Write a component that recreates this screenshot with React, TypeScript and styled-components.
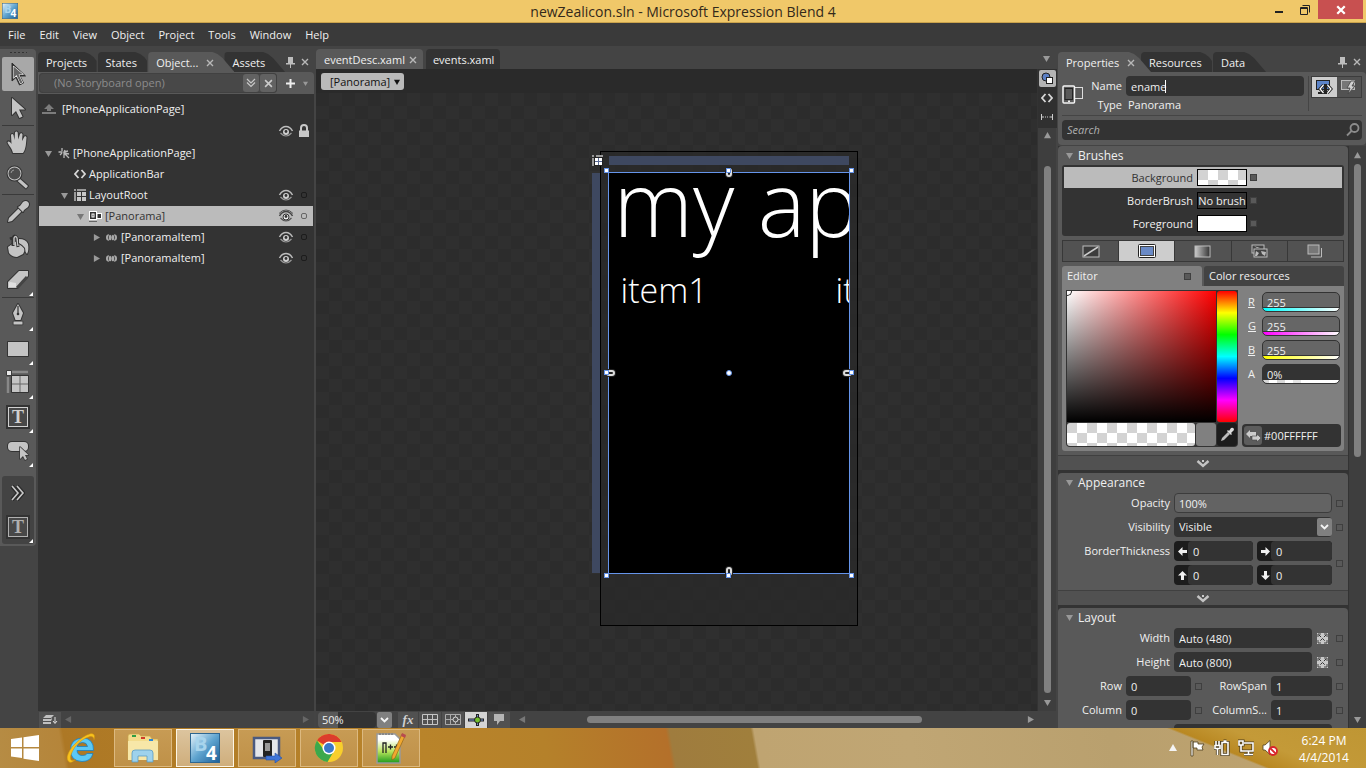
import React from "react";
import styled, { createGlobalStyle, css } from "styled-components";

const c = {
  text: "#f0f0f0",
  dim: "#8c8c8c",
  panel: "#595959",
  frame: "#444444",
  well: "#333333",
  light: "#bbbbbb",
  glyph: "#c4c4c4",
};

const Global = createGlobalStyle`
  *, *::before, *::after { box-sizing: border-box; }
  html, body, #root { height: 100%; }
  body { margin: 0; overflow: hidden; background: ${c.frame}; }
  body, button, input, select { font-family: "Open Sans", "Noto Sans", sans-serif; font-size: 11px; line-height: 16px; color: ${c.text}; }
  button { padding: 0; border: 0; background: none; cursor: default; }
  input, select { padding: 0; border: 0; outline: 0; min-width: 0; }
  ul { list-style: none; margin: 0; padding: 0; }
  h2 { margin: 0; }
  svg { display: block; flex: none; }
`;

/* ---------- window frame ---------- */

const Shell = styled.div`
  display: flex;
  flex-direction: column;
  height: 100vh;
`;

const TitleBar = styled.header`
  display: grid;
  grid-template-columns: 120px 1fr 120px;
  flex: none;
  height: 23px;
  background: #f0c869;
  border-bottom: 1px solid #c9a24c;
`;

const AppBadge = styled.span`
  padding: 3px 0 0 2px;
`;

const Title = styled.h1`
  margin: 0;
  text-align: center;
  font-size: 14px;
  line-height: 24px;
  font-weight: 400;
  color: #33291a;
`;

const WindowButtons = styled.div`
  display: flex;
  justify-content: flex-end;
  padding-right: 3px;
`;

const WindowButton = styled.button<{ $close?: boolean }>`
  display: flex;
  align-items: center;
  justify-content: center;
  width: ${(p) => (p.$close ? 45 : 26)}px;
  height: 19px;
  background: ${(p) => (p.$close ? "#c85050" : "transparent")};
`;

const MenuBar = styled.nav`
  display: flex;
  align-items: center;
  gap: 14px;
  flex: none;
  height: 23px;
  padding-left: 8px;
  background: #3a3a3a;
`;

const MenuItem = styled.button``;

const Workspace = styled.main`
  display: grid;
  grid-template-columns: 38px 276px minmax(0, 1fr) 308px;
  flex: 1;
  min-height: 0;
  background: ${c.frame};
`;

/* ---------- tool strip ---------- */

const ToolStrip = styled.aside`
  display: flex;
  flex-direction: column;
  align-self: start;
  width: 36px;
  margin-top: 3px;
  padding: 0 2px 2px;
  border-radius: 0 4px 4px 0;
  background: ${c.panel};
`;

const Grip = styled.div`
  height: 8px;
  margin: 0 7px;
  background: radial-gradient(circle, #333 1px, transparent 1px) 0 0 / 4px 7px repeat-x;
`;

const ToolButton = styled.button<{ $on?: boolean; $more?: boolean }>`
  position: relative;
  display: flex;
  align-items: center;
  justify-content: center;
  height: 34px;
  border-radius: 2px;
  ${(p) => p.$on && css`background: #a8a8a8;`}
  ${(p) =>
    p.$more &&
    css`
      &::after {
        content: "";
        position: absolute;
        right: 1px;
        bottom: 1px;
        border: 2px solid #fff;
        border-left-color: transparent;
        border-top-color: transparent;
      }
    `}
`;

const ToolRule = styled.div`
  height: 1px;
  background: #3a3a3a;
`;

const ToolWell = styled.div`
  display: flex;
  flex-direction: column;
  margin-top: 8px;
  border-radius: 3px;
  background: #434343;
`;

/* ---------- docked panel tabs ---------- */

const TabRow = styled.div`
  display: flex;
  align-items: stretch;
  flex: none;
  height: 26px;
  padding-top: 6px;
`;

const PanelTab = styled.button<{ $on?: boolean; $slant?: boolean; $w: number }>`
  display: flex;
  align-items: center;
  gap: 8px;
  width: ${(p) => p.$w}px;
  margin-right: ${(p) => (p.$on ? -10 : 1)}px;
  z-index: ${(p) => (p.$on ? 1 : 0)};
  padding: 1px 0 0 8px;
  white-space: nowrap;
  border-top-left-radius: 4px;
  background: ${(p) => (p.$on ? c.panel : c.well)};
  clip-path: ${(p) =>
    p.$on || p.$slant
      ? "polygon(0 0, calc(100% - 22px) 0, calc(100% - 17px) 2px, calc(100% - 12px) 6px, 100% 100%, 0 100%)"
      : "polygon(0 0, calc(100% - 12px) 0, calc(100% - 7px) 2px, calc(100% - 3px) 5px, 100% 9px, 100% 100%, 0 100%)"};
`;

const DockButtons = styled.div`
  display: flex;
  align-items: center;
  gap: 6px;
  margin-left: auto;
  padding-right: 5px;
`;

/* ---------- objects and timeline ---------- */

const ObjectsPanel = styled.section`
  display: flex;
  flex-direction: column;
  min-height: 0;
`;

const StoryBar = styled.div`
  display: flex;
  align-items: center;
  flex: none;
  height: 22px;
  padding: 1px;
  background: ${c.panel};
  border-radius: 0 4px 0 0;
`;

const StoryField = styled.div`
  display: flex;
  align-items: center;
  gap: 1px;
  width: 238px;
  height: 20px;
  padding: 0 1px 0 15px;
  border-radius: 4px;
  background: #484848;
  box-shadow: inset 0 0 0 1px #414141;
  input {
    flex: 1;
    background: none;
    color: ${c.dim};
  }
`;

const SmallKey = styled.button`
  display: flex;
  align-items: center;
  justify-content: center;
  width: 16px;
  height: 18px;
  border-radius: 3px;
  background: #626262;
`;

const AddKey = styled.button`
  display: flex;
  align-items: center;
  gap: 8px;
  margin-left: auto;
  padding-right: 5px;
`;

const TreeArea = styled.div`
  flex: 1;
  min-height: 0;
  padding: 0 1px;
  background: ${c.well};
`;

const ScopeRow = styled.div`
  display: flex;
  align-items: center;
  gap: 6px;
  height: 30px;
  padding-left: 3px;
`;

const ColumnHeads = styled.div`
  display: flex;
  justify-content: flex-end;
  gap: 4px;
  height: 19px;
  padding-right: 3px;
`;

const TreeRow = styled.li<{ $depth: number; $on?: boolean }>`
  display: flex;
  align-items: center;
  height: 20px;
  margin-bottom: 1px;
  padding-left: ${(p) => 1 + p.$depth * 16}px;
  background: ${(p) => (p.$on ? c.light : "transparent")};
  color: ${(p) => (p.$on ? "#333" : c.text)};
`;

const TreeTwist = styled.span`
  display: flex;
  justify-content: center;
  width: 16px;
`;

const TreeIcon = styled.span`
  display: flex;
  justify-content: center;
  width: 15px;
  margin-right: 2px;
`;

const TreeName = styled.span`
  flex: 1;
`;

const LockDot = styled.button<{ $on?: boolean }>`
  width: 6px;
  height: 6px;
  margin: 0 6px 0 7px;
  border: 1px solid ${(p) => (p.$on ? "#666" : "#1c1c1c")};
  border-radius: 2px;
`;

const PanelFoot = styled.div`
  display: flex;
  align-items: center;
  flex: none;
  height: 17px;
  padding: 0 5px 0 1px;
  background: #434343;
`;

const FootKey = styled.button<{ $on?: boolean; $w?: number }>`
  display: flex;
  align-items: center;
  justify-content: center;
  width: ${(p) => p.$w || 22}px;
  height: 16px;
  margin-right: 1px;
  background: ${(p) => (p.$on ? "#d4d4d4" : "#515151")};
`;

const Fx = styled.em`
  font-family: "Liberation Serif", serif;
  font-size: 13px;
  font-weight: 700;
  color: #d0d0d0;
`;

const FootArrow = styled.span`
  padding-left: 3px;
`;

/* ---------- document area ---------- */

const DocColumn = styled.section`
  display: flex;
  flex-direction: column;
  min-height: 0;
  margin: 0 2px;
`;

const DocTabs = styled.div`
  display: flex;
  align-items: stretch;
  gap: 3px;
  flex: none;
  height: 23px;
  padding: 3px 6px 0 0;
`;

const DocTab = styled.button<{ $on?: boolean }>`
  display: flex;
  align-items: center;
  gap: 4px;
  padding: ${(p) => (p.$on ? "2px 6px 0 8px" : "2px 6px 0 7px")};
  border-radius: 4px 4px 0 0;
  background: ${(p) => (p.$on ? c.panel : c.well)};
`;

const DocMenu = styled.button`
  margin-left: auto;
  padding-bottom: 2px;
`;

const DocBody = styled.div`
  display: grid;
  grid-template-columns: minmax(0, 1fr) 18px;
  flex: 1;
  min-height: 0;
`;

const CanvasSide = styled.div`
  display: flex;
  flex-direction: column;
  min-height: 0;
  border-right: 1px solid #333;
`;

const Crumbs = styled.div`
  flex: none;
  height: 24px;
  padding: 4px 5px;
  background: #2a2a2a;
`;

const Crumb = styled.button`
  display: flex;
  align-items: center;
  gap: 4px;
  height: 17px;
  padding: 0 4px 0 9px;
  border-radius: 3px;
  background: #b9b9b9;
  color: #111;
`;

const Canvas = styled.div`
  display: flex;
  justify-content: center;
  align-items: flex-start;
  flex: 1;
  min-height: 0;
  overflow: hidden;
  padding: 58px 0 0 104px;
  background: conic-gradient(#2f2f2f 25%, #2c2c2c 0 50%, #2f2f2f 0 75%, #2c2c2c 0) 0 0 / 26px 26px;
`;

const Artboard = styled.div`
  position: relative;
  flex: none;
  width: 258px;
  height: 475px;
  border: 1px solid #000;
  background: #27272790;
`;

const Ruler = styled.div<{ $side?: boolean }>`
  position: absolute;
  background: #3e4860;
  ${(p) =>
    p.$side
      ? css`left: -9px; top: 21px; width: 8px; height: 400px;`
      : css`left: 8px; top: 4px; width: 240px; height: 9px;`}
`;

const RulerCorner = styled.div`
  position: absolute;
  left: -9px;
  top: 3px;
`;

const PhonePage = styled.div`
  position: absolute;
  left: 7px;
  top: 20px;
  width: 242px;
  height: 402px;
  border: 1px solid #6594ea;
  background: #000;
  overflow: hidden;
`;

const PageTitle = styled.div`
  position: absolute;
  left: 5px;
  top: -33px;
  font-size: 90px;
  line-height: 124px;
  font-weight: 300;
  white-space: nowrap;
  color: #fff;
`;

const PageItem = styled.div<{ $x: number }>`
  position: absolute;
  left: ${(p) => p.$x}px;
  top: 92px;
  font-size: 34px;
  line-height: 50px;
  font-weight: 300;
  white-space: nowrap;
  color: #fff;
`;

const Handle = styled.span<{ $x: number; $y: number; $dot?: boolean }>`
  position: absolute;
  left: ${(p) => p.$x}px;
  top: ${(p) => p.$y}px;
  width: ${(p) => (p.$dot ? 6 : 5)}px;
  height: ${(p) => (p.$dot ? 6 : 5)}px;
  border: 1px solid #6594ea;
  border-radius: ${(p) => (p.$dot ? "3px" : "0")};
  background: #fff;
`;

const Link = styled.span<{ $x: number; $y: number; $tall?: boolean }>`
  position: absolute;
  left: ${(p) => p.$x}px;
  top: ${(p) => p.$y}px;
  width: ${(p) => (p.$tall ? 6 : 9)}px;
  height: ${(p) => (p.$tall ? 9 : 6)}px;
  border: 2px solid #ddd;
  border-radius: 3px;
  background: #222;
  box-shadow: 0 0 0 1px #222;
`;

const RightRail = styled.div`
  display: flex;
  flex-direction: column;
  align-items: center;
  min-height: 0;
  padding-bottom: 5px;
  background: #3e3e3e;
`;

const RailKeys = styled.div`
  padding: 1px;
  margin-bottom: 4px;
  background: #303030;
`;

const RailKey = styled.button<{ $on?: boolean }>`
  display: flex;
  align-items: center;
  justify-content: center;
  width: 17px;
  height: 17px;
  margin-bottom: 2px;
  border-radius: 2px;
  background: ${(p) => (p.$on ? "#b4b4b4" : "transparent")};
`;

const VThumb = styled.div<{ $h?: number }>`
  width: 7px;
  border-radius: 4px;
  background: #808080;
  ${(p) => (p.$h ? css`flex: 0 0 ${p.$h}px; margin: 5px 0;` : css`flex: 1; margin: 27px 0 6px;`)}
`;

const DocFoot = styled.div`
  display: flex;
  align-items: center;
  flex: none;
  height: 17px;
  padding-left: 2px;
  background: #434343;
`;

const ZoomField = styled.input`
  width: 58px;
  height: 16px;
  padding-left: 4px;
  border-radius: 4px;
  background: linear-gradient(90deg, #595959 20px, ${c.well} 0);
`;

const ZoomDrop = styled.button`
  display: flex;
  align-items: center;
  justify-content: center;
  width: 15px;
  height: 16px;
  margin: 0 6px 0 1px;
  border-radius: 2px;
  background: #808080;
`;

const HTrack = styled.div`
  display: flex;
  align-items: center;
  flex: 1;
  height: 17px;
  padding: 0 22px 0 8px;
`;

const HThumb = styled.div`
  width: 65%;
  height: 7px;
  margin: 0 auto 0 61px;
  border-radius: 4px;
  background: #808080;
`;

/* ---------- properties ---------- */

const PropsPanel = styled.section`
  display: flex;
  flex-direction: column;
  min-height: 0;
`;

const PropsHead = styled.div`
  flex: none;
  height: 73px;
  margin-bottom: 1px;
  padding: 4px 4px 0;
  border-radius: 0 4px 4px 4px;
  background: ${c.panel};
`;

const Identity = styled.div`
  display: grid;
  grid-template-columns: 60px 178px 4px 1fr;
  column-gap: 4px;
  height: 40px;
  border-bottom: 1px solid #454545;
`;

const IdentityLabels = styled.div`
  display: grid;
  grid-template-columns: 22px 1fr;
  align-items: center;
  text-align: right;
  height: 38px;
`;

const NameStack = styled.div`
  display: flex;
  flex-direction: column;
`;

const LabelLine = styled.label`
  display: block;
  height: 19px;
  line-height: 20px;
`;

const TypeValue = styled.div`
  padding-left: 2px;
  line-height: 18px;
`;

const field = css`
  height: 20px;
  border-radius: 4px;
  background: ${c.well};
  padding-left: 5px;
`;

const NameWrap = styled.div`
  position: relative;
  display: flex;
`;

const TextCaret = styled.i`
  position: absolute;
  left: 39px;
  top: 4px;
  width: 1px;
  height: 13px;
  background: #fff;
`;

const Field = styled.input<{ $soft?: boolean }>`
  ${field}
  flex: 1;
  width: 100%;
  ${(p) => p.$soft && css`background: #636363; border: 1px solid #3c3c3c; padding-left: 4px;`}
`;

const VRule = styled.div`
  height: 35px;
  border-left: 1px solid #454545;
`;

const ModeKeys = styled.div`
  display: flex;
  height: 22px;
  margin-left: -5px;
  border: 1px solid #3c3c3c;
`;

const ModeKey = styled.button<{ $on?: boolean }>`
  display: flex;
  align-items: center;
  justify-content: center;
  flex: 1;
  background: ${(p) => (p.$on ? "#cdcdcd" : "#525252")};
`;

const SearchBox = styled.label`
  ${field}
  display: flex;
  align-items: center;
  margin-top: 4px;
  padding-right: 2px;
  input {
    flex: 1;
    background: none;
    font-style: italic;
  }
  input::placeholder { color: #b0b0b0; }
`;

const PropsBody = styled.div`
  display: grid;
  grid-template-columns: minmax(0, 1fr) 18px;
  flex: 1;
  min-height: 0;
  background: ${c.well};
`;

const PropsScroll = styled.div`
  min-height: 0;
  overflow: hidden;
`;

const PropsRail = styled.div`
  display: flex;
  flex-direction: column;
  align-items: center;
  padding: 6px 0 5px;
  background: #3e3e3e;
  border-left: 1px solid ${c.well};
`;

const Spacer = styled.div`
  flex: 1;
`;

const Category = styled.section`
  margin-bottom: 3px;
  border-radius: 4px 4px 0 0;
  background: ${c.panel};
`;

const CategoryTitle = styled.h2`
  display: flex;
  align-items: center;
  gap: 5px;
  height: 19px;
  padding-left: 8px;
  font-size: 12px;
  font-weight: 400;
`;

const CategoryBody = styled.div<{ $flush?: boolean }>`
  display: flex;
  flex-direction: column;
  gap: 4px;
  padding: ${(p) => (p.$flush ? "0 4px 4px" : "1px 4px 5px")};
`;

const Expander = styled.button`
  display: flex;
  align-items: center;
  justify-content: center;
  width: 100%;
  height: 15px;
  border-top: 1px solid #404040;
  background: #515151;
`;

const BrushList = styled.ul`
  display: flex;
  flex-direction: column;
  gap: 2px;
  padding: 2px;
  border-radius: 3px;
  background: ${c.well};
`;

const BrushRow = styled.li<{ $on?: boolean }>`
  display: grid;
  grid-template-columns: minmax(0, 1fr) 50px 7px;
  align-items: center;
  height: 21px;
  padding-right: 85px;
  background: ${(p) => (p.$on ? c.light : "transparent")};
  color: ${(p) => (p.$on ? "#333" : c.text)};
  column-gap: 3px;
`;

const BrushName = styled.span`
  padding-right: 1px;
  text-align: right;
`;

const checker = "conic-gradient(#fff 25%, #d3d3d3 0 50%, #fff 0 75%, #d3d3d3 0)";

const Swatch = styled.button<{ $bg: string }>`
  width: 50px;
  height: 17px;
  border: 1px solid #000;
  background: ${(p) => p.$bg};
  white-space: nowrap;
  line-height: 15px;
`;

const Marker = styled.button<{ $fill?: boolean }>`
  flex: none;
  width: 7px;
  height: 7px;
  border: 1px solid #3f3f3f;
  background: ${(p) => (p.$fill ? "#595959" : "transparent")};
`;

const BrushKinds = styled.div`
  display: grid;
  grid-template-columns: repeat(5, 1fr);
  gap: 1px;
  height: 22px;
  border: 1px solid #383838;
  background: #383838;
`;

const BrushKind = styled.button<{ $on?: boolean }>`
  display: flex;
  align-items: center;
  justify-content: center;
  background: ${(p) => (p.$on ? "#cdcdcd" : "#525252")};
`;

const EditorTabs = styled.div`
  display: grid;
  grid-template-columns: 1fr 1fr;
  gap: 2px;
  height: 20px;
`;

const EditorTab = styled.button<{ $on?: boolean }>`
  display: flex;
  align-items: center;
  justify-content: space-between;
  padding: 0 11px 0 5px;
  border-radius: 3px 3px 0 0;
  background: ${(p) => (p.$on ? "#808080" : "#434343")};
`;

const EditorBody = styled.div`
  display: grid;
  grid-template-columns: 172px minmax(0, 1fr);
  column-gap: 4px;
  padding: 4px 3px 4px 4px;
  border-radius: 0 0 3px 3px;
  background: #808080;
`;

const EditorBlock = styled.div``;

const Picker = styled.div`
  display: grid;
  grid-template-columns: 149px 20px;
  grid-template-rows: 131px 23px;
  gap: 1px;
  padding: 1px;
  background: ${c.well};
  border-radius: 0 0 4px 4px;
`;

const ColorField = styled.div`
  background: linear-gradient(0deg, #000, transparent), linear-gradient(90deg, #fff, #f00);
`;

const PickRing = styled.i`
  display: block;
  width: 5px;
  height: 5px;
  border: solid #222;
  border-width: 0 1px 1px 0;
  border-radius: 0 0 5px 0;
`;

const HueBar = styled.div`
  border-radius: 3px;
  background: linear-gradient(#f00, #ff0, #0f0, #0ff, #00f, #f0f, #f00);
`;

const Preview = styled.div`
  display: grid;
  grid-template-columns: 128px 1fr;
  gap: 1px;
`;

const PreviewNow = styled.div`
  border-radius: 3px;
  background: ${checker} 0 0 / 20px 20px;
`;

const PreviewLast = styled.div`
  border-radius: 3px;
  background: #808080;
`;

const Dropper = styled.button`
  display: flex;
  align-items: center;
  justify-content: center;
  border-radius: 3px;
  background: #1c1c1c;
`;

const Channels = styled.div`
  display: flex;
  flex-direction: column;
  gap: 4px;
  padding-top: 2px;
`;

const Channel = styled.label<{ $plain?: boolean }>`
  display: grid;
  grid-template-columns: 20px minmax(0, 1fr);
  align-items: center;
  padding-right: 1px;
  span {
    padding-left: 6px;
    text-decoration: ${(p) => (p.$plain ? "none" : "underline")};
  }
`;

const ChannelInput = styled.input<{ $bar: string; $dark?: boolean }>`
  height: 20px;
  width: 100%;
  padding-left: 4px;
  border: 1px solid ${c.well};
  border-radius: 5px;
  background: ${(p) => p.$bar} 0 100% / 100% 3px no-repeat, linear-gradient(${c.well}, ${c.well}) 0 calc(100% - 3px) / 100% 1px no-repeat,
    ${(p) => (p.$dark ? c.well : "#666")};
`;

const HexRow = styled.label`
  ${field}
  display: flex;
  align-items: center;
  gap: 2px;
  height: 23px;
  margin-top: auto;
  padding-left: 2px;
  input { flex: 1; background: none; width: 40px; }
`;

const HexKey = styled.button`
  display: flex;
  align-items: center;
  justify-content: center;
  width: 18px;
  height: 19px;
  border-radius: 3px;
  background: #5c5c5c;
`;

const PropRow = styled.div`
  display: grid;
  grid-template-columns: 108px minmax(0, 1fr) 8px;
  align-items: center;
  column-gap: 4px;
  height: 20px;
  > label { text-align: right; }
`;

const WithButton = styled.div`
  display: flex;
  align-items: center;
  gap: 4px;
`;

const SelectWrap = styled.div`
  display: flex;
  position: relative;
  select {
    ${field}
    appearance: none;
    width: 100%;
  }
`;

const SelectArrow = styled.span`
  position: absolute;
  right: 0;
  top: 1px;
  display: flex;
  align-items: center;
  justify-content: center;
  width: 15px;
  height: 18px;
  border-radius: 2px;
  background: #808080;
  pointer-events: none;
`;

const ThicknessBlock = styled.fieldset`
  display: grid;
  grid-template-columns: 108px minmax(0, 1fr) 8px;
  column-gap: 4px;
  margin: 0;
  padding: 0;
  border: 0;
  align-items: center;
`;

const ThicknessName = styled.span`
  align-self: start;
  line-height: 20px;
  text-align: right;
`;

const ThicknessGrid = styled.div`
  display: grid;
  grid-template-columns: 79px minmax(0, 1fr);
  gap: 4px;
`;

const Edge = styled.label`
  display: flex;
  align-items: center;
  padding-left: 4px;
  border-radius: 4px;
  background: #1c1c1c;
  input { margin-left: 1px; }
`;

const GridPair = styled.div`
  display: grid;
  grid-template-columns: 60px 65px 8px 60px minmax(0, 1fr) 8px;
  align-items: center;
  column-gap: 4px;
  height: 20px;
  > label { text-align: right; }
`;

const AutoKey = styled.button`
  margin: 0 4px 0 1px;
`;

/* ---------- taskbar ---------- */

const Taskbar = styled.footer`
  display: flex;
  align-items: stretch;
  flex: none;
  height: 40px;
  background:
    linear-gradient(22deg, transparent 0 37px, #b98822 39px, #c49a38 60px, #bf9634 112px) 100% 0 / 200px 40px no-repeat,
    linear-gradient(80deg, #b68c44 0, #b5853a 64px, #ad7825 68px, #b9842a 420px, #b5812a 540px, #b4702a 662px, #9f7c3e 666px, #a07f3c 746px, #bfa471 749px, #c0a674 900px, #b9a06e 1100px, #c0a470 1366px);
`;

const StartKey = styled.button`
  display: flex;
  align-items: center;
  justify-content: center;
  width: 50px;
`;

const PinKey = styled.button`
  display: flex;
  align-items: center;
  justify-content: center;
  width: 62px;
`;

const TaskKey = styled.button<{ $on?: boolean }>`
  display: flex;
  align-items: center;
  justify-content: center;
  width: 58px;
  margin: 1px 2px;
  border: 1px solid ${(p) => (p.$on ? "#fdf6e6" : "#dcb980")};
  background: ${(p) => (p.$on ? "linear-gradient(#dcc49e, #cfae7c)" : "linear-gradient(#c79b54, #bf9148)")};
`;

const Tray = styled.div`
  display: flex;
  align-items: center;
  gap: 8px;
  margin-left: auto;
`;

const TrayArrow = styled.button`
  padding-right: 4px;
`;

const Clock = styled.time`
  width: 80px;
  padding: 2px 4px 0 0;
  text-align: center;
  font-size: 12px;
  line-height: 17px;
  color: #fff;
`;

/* ---------- glyphs ---------- */

const Tri = ({ d = "down", s = 7, f = "#999" }: { d?: string; s?: number; f?: string }) => {
  const pts: Record<string, string> = { down: "0,1 8,1 4,8", up: "0,7 8,7 4,0", right: "1,0 8,4 1,8", left: "7,0 0,4 7,8" };
  return (
    <svg width={s} height={s} viewBox="0 0 8 8" aria-hidden>
      <polygon points={pts[d]} fill={f} />
    </svg>
  );
};

const Cross = ({ s = 8, f = "#b8b8b8", w = 1.4 }: { s?: number; f?: string; w?: number }) => (
  <svg width={s} height={s} viewBox="0 0 8 8" aria-hidden>
    <path d="M1 1l6 6M7 1L1 7" stroke={f} strokeWidth={w} />
  </svg>
);

const Pin = () => (
  <svg width="9" height="11" viewBox="0 0 9 11" aria-hidden>
    <path d="M2 0h5v6h2v1.500H0V6h2zM4 7h1v4H4z" fill="#bdbdbd" />
  </svg>
);

const Eye = ({ on }: { on?: boolean }) => (
  <svg width="16" height="14" viewBox="0 0 16 14" aria-hidden>
    <path d="M1.500 7Q4 2.500 8 2.500T14.500 7" fill="none" stroke={on ? "#444" : "#bdbdbd"} strokeWidth="1.500" />
    {on && <path d="M1 4.500Q4 1 8 1t7 3.500" fill="none" stroke="#555" />}
    <path d="M2.500 9q5.500 6 11 0" fill="none" stroke={on ? "#555" : "#999"} strokeWidth="1.200" />
    <circle cx="8" cy="8" r="3" fill={on ? "#eee" : "#d0d0d0"} stroke={on ? "#333" : "none"} />
    <circle cx="8" cy="7.500" r="1.400" fill="#333" />
  </svg>
);

const Lock = () => (
  <svg width="12" height="14" viewBox="0 0 12 14" aria-hidden>
    <path d="M3 7V4a3 3 0 016 0v3" fill="none" stroke="#c8c8c8" strokeWidth="2" />
    <rect x="1" y="6.500" width="10" height="6.500" fill="#c8c8c8" />
  </svg>
);

const OutlineSvg = styled.svg`
  paint-order: stroke;
`;

const Out = ({ children }: { children: React.ReactNode }) => (
  <OutlineSvg width={26} height={26} viewBox="0 0 26 26" fill={c.glyph} stroke="#333" strokeWidth="2" strokeLinejoin="round" aria-hidden>
    {children}
  </OutlineSvg>
);

function TextTool({ f = "#d0d0d0" }: { f?: string }) {
  return (
    <svg width="24" height="24" viewBox="0 0 24 24" aria-hidden>
      <rect x="1.500" y="1.500" width="21" height="21" fill="#5a5a5a" stroke="#333" strokeWidth="3" />
      <rect x="2.500" y="2.500" width="19" height="19" fill="#484848" stroke={f} />
      <text x="12" y="18" textAnchor="middle" fontSize="18" fontWeight="700" fontFamily="Liberation Serif, serif" fill={f}>
        T
      </text>
    </svg>
  );
}

const Tools: Record<string, React.ReactNode> = {
  Selection: (
    <Out>
      <path d="M7 2v18l4-3.500 3.500 7.500 4-2-3.500-7h5.500z" fill="#2c2c2c" stroke="#333" strokeWidth="1" />
      <path d="M8.500 5.500v11.500l3-3 4 8.500 2-1-4-8h4.500z" fill="#666" stroke="#f0f0f0" strokeWidth="1.200" />
    </Out>
  ),
  "Direct Selection": (
    <Out>
      <path d="M7 3v17l4-4 3.500 7 3-1.500-3.500-7h6z" />
    </Out>
  ),
  Pan: (
    <Out>
      <path d="M8 23c-1-5-5-8-5.500-11 1-1.500 3 0 4 2L6 5c.5-1.500 2-1.500 2.500 0l1 5 .5-7.500c.5-1.300 2.300-1.300 2.700 0l.5 7L15 4c.6-1.200 2.300-1 2.500.4L17 11l2.500-4.500c1-.8 2.200 0 2 1.200C21 13 21 19 18 23z" />
    </Out>
  ),
  Zoom: (
    <Out>
      <path d="M14 14l9 8-2 2.500-9-8z" />
      <circle cx="9.500" cy="9.500" r="6" fill="#444" stroke="#333" strokeWidth="4" />
      <circle cx="9.500" cy="9.500" r="6" fill="#4c4c4c" stroke="#c4c4c4" strokeWidth="1.800" />
      <path d="M6 9a3.500 3.500 0 013-3" fill="none" stroke="#999" strokeWidth="1" />
    </Out>
  ),
  Eyedropper: (
    <Out>
      <path d="M3 23l1-4L14 9l3 3L7 22z" />
      <path d="M13 8l2-1 3-4q3-2 5 0t0 5l-4 3-1 2z" />
    </Out>
  ),
  "Paint Bucket": (
    <Out>
      <path d="M3 14L13 7l8 8-3 6-6 3q-5 0-8-4z" />
      <path d="M5 6l4-2M8 13V5q1.500-4 4 0l1 9" fill="none" stroke="#333" strokeWidth="3" />
      <path d="M9 12V5q1.500-3 3 0l1 8" fill="none" stroke="#c4c4c4" strokeWidth="1.400" />
      <path d="M14 6q7 0 9 5 1 6-1 10-2-2-2-6-2-3-6-5z" />
    </Out>
  ),
  Gradient: (
    <Out>
      <path d="M3 15L14 4h9v5L12 21H3z" />
      <path d="M12 21l10-11" stroke="#444" strokeWidth="3" fill="none" />
      <path d="M4 16l1-1 6 1v4H4z" fill="#e0e0e0" stroke="none" />
    </Out>
  ),
  Pen: (
    <Out>
      <path d="M13 2l5 9-2.500 7h-5L8 11z" />
      <path d="M8.500 19.500h9v3h-9z" strokeWidth="1.500" />
      <path d="M13 4v8" stroke="#333" strokeWidth="1.200" />
      <circle cx="13" cy="12" r="1.300" fill="#333" stroke="none" />
    </Out>
  ),
  Rectangle: (
    <Out>
      <rect x="3" y="6" width="20" height="14" />
    </Out>
  ),
  Grid: (
    <Out>
      <path d="M7 2h16M3 7v16" stroke="#888" strokeWidth="2.500" />
      <rect x="2" y="1" width="4" height="4" fill="#e8e8e8" strokeWidth="1.500" />
      <rect x="7" y="6" width="16" height="16" />
      <path d="M15 6v16M7 14h16" stroke="#666" strokeWidth="1" />
    </Out>
  ),
  TextBlock: <TextTool />,
  Button: (
    <Out>
      <rect x="3" y="4" width="20" height="9" rx="4" />
      <path d="M15 9v12l3-3 2 4 2-1-2-4h3.500z" strokeWidth="1.500" />
    </Out>
  ),
};

const Chev = () => (
  <svg width="14" height="9" viewBox="0 0 14 9" aria-hidden>
    <path d="M1.500 2l5.500 5 5.500-5" fill="none" stroke="#c4c4c4" strokeWidth="2.400" />
    <rect x="6" y="1" width="2" height="2" fill="#ccc" />
  </svg>
);

const DropV = () => (
  <svg width="9" height="6" viewBox="0 0 9 6" aria-hidden>
    <path d="M1 1l3.500 3.500L8 1" fill="none" stroke="#f4f4f4" strokeWidth="1.800" />
  </svg>
);

const Angle = () => (
  <svg width="12" height="12" viewBox="0 0 12 12" aria-hidden>
    <path d="M4.500 2L1 6l3.500 4M7.500 2L11 6l-3.500 4" fill="none" stroke="#d8d8d8" strokeWidth="1.800" />
  </svg>
);

const PageIcon = () => (
  <svg width="12" height="12" viewBox="0 0 12 12" fill="none" stroke="#b8b8b8" strokeWidth="1.300" aria-hidden>
    <path d="M4 1v3M0.500 5h4M2 8l2-2M7 3l-1 2 4-1M6 6l5 5M6 6v5M6 6l5 1" />
  </svg>
);

const GridIcon = () => (
  <svg width="12" height="12" viewBox="0 0 12 12" aria-hidden>
    <path d="M0 0h2v2H0zM3 0h9v2H3zM0 3h2v9H0z" fill="#999" />
    <path d="M3 3h4v4H3zM8 3h4v4H8zM3 8h4v4H3zM8 8h4v4H8z" fill="#c8c8c8" />
  </svg>
);

const PanoIcon = () => (
  <svg width="13" height="11" viewBox="0 0 13 11" aria-hidden>
    <rect x="0" y="0" width="8" height="9" fill="#fff" />
    <rect x="1" y="1" width="6" height="7" fill="#333" />
    <rect x="3" y="3" width="2" height="3" fill="#333" stroke="#fff" />
    <rect x="8" y="2" width="5" height="6" fill="#fff" />
    <rect x="8.500" y="3" width="3.500" height="4" fill="#333" />
    <path d="M0 10.500h8" stroke="#666" />
  </svg>
);

const ItemIcon = () => (
  <svg width="11" height="7" viewBox="0 0 12 7" fill="#aaa" aria-hidden>
    <path d="M3.500 0A3.500 3.500 0 003.500 7L2 3.500zM8.500 0a3.500 3.500 0 010 7L10 3.500z" />
    <ellipse cx="4.500" cy="3.500" rx="1.500" ry="3" />
    <ellipse cx="7.500" cy="3.500" rx="1.500" ry="3" />
  </svg>
);

const DropperIcon = () => (
  <svg width="17" height="17" viewBox="0 0 17 17" aria-hidden>
    <path d="M2 15l1-3 6-6 2 2-6 6z" fill="#bbb" />
    <path d="M8 5l4 4 1-1-1-1 3-3q0-3-3-2L10 5 9 4z" fill="#ddd" />
  </svg>
);

const FourWay = () => (
  <svg width="11" height="11" viewBox="0 0 11 11" aria-hidden>
    <rect width="11" height="11" fill="#c8c8c8" />
    <path d="M2 2l7 7M9 2L2 9" stroke="#333" strokeWidth="1" strokeDasharray="3 2" />
    <path d="M1 4V1h3M7 1h3v3M1 7v3h3M7 10h3V7" stroke="#444" fill="none" />
  </svg>
);

const EdgeArrow = ({ r }: { r: number }) => (
  <svg width="9" height="9" viewBox="0 0 9 9" aria-hidden>
    <path d="M0 4.500L4.500 0v3H9v3H4.500v3z" fill="#f0f0f0" transform={`rotate(${r} 4.500 4.500)`} />
  </svg>
);

/* ---------- data ---------- */

const tree = [
  { name: "[PhoneApplicationPage]", depth: 0, open: "down", icon: <PageIcon />, eye: false },
  { name: "ApplicationBar", depth: 1, open: "", icon: <Angle />, eye: false },
  { name: "LayoutRoot", depth: 1, open: "down", icon: <GridIcon />, eye: true },
  { name: "[Panorama]", depth: 2, open: "down", icon: <PanoIcon />, eye: true, on: true },
  { name: "[PanoramaItem]", depth: 3, open: "right", icon: <ItemIcon />, eye: true },
  { name: "[PanoramaItem]", depth: 3, open: "right", icon: <ItemIcon />, eye: true },
];

const toolGroups = [
  ["Selection", "Direct Selection"],
  ["Pan", "Zoom"],
  ["Eyedropper", "Paint Bucket", "Gradient"],
  ["Pen", "Rectangle", "Grid", "TextBlock", "Button"],
];

const withMore = ["Gradient", "Pen", "Rectangle", "Grid", "TextBlock", "Button"];

const channels = [
  { id: "R", value: "255", bar: "linear-gradient(90deg, #0ff, #fff)" },
  { id: "G", value: "255", bar: "linear-gradient(90deg, #f0f, #fff)" },
  { id: "B", value: "255", bar: "linear-gradient(90deg, #ff0, #fff)" },
  { id: "A", value: "0%", bar: "linear-gradient(90deg, #d8d8d8 0 6px, #fff 6px 14px, #d8d8d8 14px 22px, #fff 22px 30px, #e4e4e4 30px 38px, #fff 38px)", dark: true },
];

const handles = [
  [3, 16],
  [125, 16],
  [248, 16],
  [3, 218],
  [248, 218],
  [3, 421],
  [125, 421],
  [248, 421],
];

const brushes = [
  { name: "Background", bg: `${checker} 0 0 / 20px 20px`, text: "", on: true },
  { name: "BorderBrush", bg: "#333", text: "No brush" },
  { name: "Foreground", bg: "#fff", text: "" },
];

/* ---------- parts ---------- */

const ToolBox = () => (
  <ToolStrip>
    <Grip />
    {toolGroups.map((group, i) => (
      <React.Fragment key={i}>
        {i > 0 && <ToolRule />}
        {group.map((name) => (
          <ToolButton key={name} aria-label={name} $on={name === "Selection"} $more={withMore.includes(name)}>
            {Tools[name]}
          </ToolButton>
        ))}
      </React.Fragment>
    ))}
    <ToolWell>
      <ToolButton aria-label="Assets">
        <svg width="14" height="16" viewBox="0 0 14 16" fill="none" aria-hidden>
          <path d="M1 1l6 7-6 7M6 1l6 7-6 7" stroke="#2a2a2a" strokeWidth="4" />
          <path d="M1 1l6 7-6 7M6 1l6 7-6 7" stroke="#c8c8c8" strokeWidth="1.600" />
        </svg>
      </ToolButton>
      <ToolButton aria-label="Last used asset" $more>
        <TextTool f="#b0b0b0" />
      </ToolButton>
    </ToolWell>
  </ToolStrip>
);

const Objects = () => (
  <ObjectsPanel>
    <TabRow>
      <PanelTab $w={59}>Projects</PanelTab>
      <PanelTab $w={50}>States</PanelTab>
      <PanelTab $w={87} $on>
        Object... <Cross />
      </PanelTab>
      <PanelTab $w={61} $slant>
        Assets
      </PanelTab>
      <DockButtons>
        <Pin />
        <Cross />
      </DockButtons>
    </TabRow>
    <StoryBar>
      <StoryField>
        <input aria-label="Storyboard" defaultValue="(No Storyboard open)" />
        <SmallKey aria-label="Open storyboard">
          <svg width="10" height="10" viewBox="0 0 10 10" fill="none" stroke="#c8c8c8" strokeWidth="1.200" aria-hidden>
            <path d="M1 1l4 4 4-4M1 4.500l4 4 4-4" />
          </svg>
        </SmallKey>
        <SmallKey aria-label="Close storyboard">
          <Cross s={9} f="#ccc" />
        </SmallKey>
      </StoryField>
      <AddKey aria-label="New storyboard">
        <svg width="9" height="9" viewBox="0 0 9 9" aria-hidden>
          <path d="M4.500 0v9M0 4.500h9" stroke="#eee" strokeWidth="2" />
        </svg>
        <Tri s={5} />
      </AddKey>
    </StoryBar>
    <TreeArea>
      <ScopeRow>
        <svg width="14" height="11" viewBox="0 0 14 11" aria-hidden>
          <path d="M7 0l5 5H9v2H5V5H2zM0 8h14v2H0z" fill="#7c7c7c" />
        </svg>
        [PhoneApplicationPage]
      </ScopeRow>
      <ColumnHeads>
        <Eye />
        <Lock />
      </ColumnHeads>
      <ul>
        {tree.map((n, i) => (
          <TreeRow key={i} $depth={n.depth} $on={n.on}>
            <TreeTwist>{n.open && <Tri d={n.open} f={n.on ? "#777" : "#999"} />}</TreeTwist>
            <TreeIcon>{n.icon}</TreeIcon>
            <TreeName>{n.name}</TreeName>
            {n.eye && <Eye on={n.on} />}
            {n.eye && <LockDot aria-label={`Lock ${n.name}`} $on={n.on} />}
          </TreeRow>
        ))}
      </ul>
    </TreeArea>
    <PanelFoot>
      <FootKey aria-label="Order">
        <svg width="15" height="11" viewBox="0 0 15 11" aria-hidden>
          <path d="M3 1h8L8 4H0zM0 5h8l1-1v1L8 7H0zM0 8h8v2H0z" fill="#c0c0c0" />
          <path d="M12 3v6M10 7l2 2.500L14 7" stroke="#ddd" fill="none" />
        </svg>
      </FootKey>
      <FootArrow>
        <Tri d="left" f="#666" />
      </FootArrow>
      <Spacer />
      <Tri d="right" f="#666" />
    </PanelFoot>
  </ObjectsPanel>
);

const Doc = () => (
  <DocColumn>
    <DocTabs>
      <DocTab $on>
        eventDesc.xaml <Cross />
      </DocTab>
      <DocTab>events.xaml</DocTab>
      <DocMenu aria-label="Open documents">
        <Tri s={7} />
      </DocMenu>
    </DocTabs>
    <DocBody>
      <CanvasSide>
        <Crumbs>
          <Crumb>
            [Panorama] <Tri s={6} f="#111" />
          </Crumb>
        </Crumbs>
        <Canvas>
          <Artboard>
            <Ruler />
            <Ruler $side />
            <RulerCorner>
              <svg width="12" height="12" viewBox="0 0 12 12" aria-hidden>
                <path d="M0 1h2M4 1h7M1 3v8" stroke="#999" strokeWidth="2" />
                <rect x="2.500" y="2.500" width="8" height="8" fill="#fff" stroke="#222" />
                <path d="M6.500 3v7M3 6.500h7" stroke="#5a6a94" />
              </svg>
            </RulerCorner>
            <PhonePage>
              <PageTitle>my application</PageTitle>
              <PageItem $x={12}>item1</PageItem>
              <PageItem $x={227}>item2</PageItem>
            </PhonePage>
            <Link $x={125} $y={16} $tall />
            <Link $x={125} $y={415} $tall />
            <Link $x={5} $y={218} />
            <Link $x={242} $y={218} />
            {handles.map(([x, y]) => (
              <Handle key={`${x}-${y}`} $x={x} $y={y} />
            ))}
            <Handle $x={125} $y={218} $dot />
          </Artboard>
        </Canvas>
      </CanvasSide>
      <RightRail>
        <RailKeys>
          <RailKey $on aria-label="Design view">
            <svg width="13" height="13" viewBox="0 0 13 13" aria-hidden>
              <circle cx="5" cy="5" r="4" fill="#5b7fc4" stroke="#222" />
              <rect x="5.500" y="5.500" width="6" height="6" fill="#fff" stroke="#222" />
            </svg>
          </RailKey>
          <RailKey aria-label="XAML view">
            <Angle />
          </RailKey>
          <RailKey aria-label="Split view">
            <svg width="12" height="8" viewBox="0 0 12 8" aria-hidden>
              <path d="M.5 1v6M11.500 1v6M1 4h2M9 4h2M4 4h1M6 4h1M8 4h.5" stroke="#ccc" />
            </svg>
          </RailKey>
        </RailKeys>
        <Tri d="up" />
        <VThumb />
        <Tri />
      </RightRail>
    </DocBody>
    <DocFoot>
      <ZoomField aria-label="Zoom" defaultValue="50%" />
      <ZoomDrop aria-label="Zoom levels">
        <DropV />
      </ZoomDrop>
      <FootKey aria-label="Effects" $w={20}>
        <Fx>fx</Fx>
      </FootKey>
      <FootKey aria-label="Show grid">
        <svg width="16" height="11" viewBox="0 0 16 11" aria-hidden>
          <path d="M.5.5h15v10H.5zM5.500 0v11M10.500 0v11M0 5.500h16" fill="none" stroke="#c4c4c4" />
        </svg>
      </FootKey>
      <FootKey aria-label="Snap to grid">
        <svg width="16" height="11" viewBox="0 0 16 11" aria-hidden>
          <path d="M.5.5h15v10H.5zM5.500 0v11M10.500 0v11M0 5.500h16" fill="none" stroke="#aaa" />
          <circle cx="10.500" cy="5.500" r="2.500" fill="#555" stroke="#ddd" />
        </svg>
      </FootKey>
      <FootKey aria-label="Snap to snaplines" $on>
        <svg width="16" height="12" viewBox="0 0 16 12" aria-hidden>
          <path d="M0 6h16M9.500 0v12" stroke="#222" strokeWidth="3" />
          <path d="M1 6h14M9.500 1v10" stroke="#7b98d8" />
          <circle cx="9.500" cy="6" r="3" fill="#72c02c" stroke="#222" />
        </svg>
      </FootKey>
      <FootKey aria-label="Annotations">
        <svg width="12" height="11" viewBox="0 0 12 11" aria-hidden>
          <path d="M1 0h10v7H7l-3 4V7H1z" fill="#b4b4b4" />
        </svg>
      </FootKey>
      <HTrack>
        <Tri d="left" f="#777" />
        <HThumb />
        <Tri d="right" />
      </HTrack>
    </DocFoot>
  </DocColumn>
);

const TextProp = ({ id, label, value, soft, extra }: { id: string; label: string; value: string; soft?: boolean; extra?: React.ReactNode }) => (
  <PropRow>
    <label htmlFor={id}>{label}</label>
    <WithButton>
      <Field id={id} defaultValue={value} $soft={soft} />
      {extra}
    </WithButton>
    <Marker aria-label={`${label} options`} />
  </PropRow>
);

const Pair = ({ a, b, bLabel }: { a: string; b: string; bLabel: string }) => (
  <GridPair>
    <label htmlFor={a}>{a}</label>
    <Field id={a} defaultValue="0" />
    <Marker aria-label={`${a} options`} />
    <label htmlFor={b}>{bLabel}</label>
    <Field id={b} defaultValue="1" />
    <Marker aria-label={`${b} options`} />
  </GridPair>
);

const Properties = () => (
  <PropsPanel>
    <TabRow>
      <PanelTab $w={93} $on>
        Properties <Cross />
      </PanelTab>
      <PanelTab $w={71}>Resources</PanelTab>
      <PanelTab $w={53} $slant>
        Data
      </PanelTab>
      <DockButtons>
        <Pin />
        <Cross />
      </DockButtons>
    </TabRow>
    <PropsHead>
      <Identity>
        <IdentityLabels>
          <svg width="22" height="20" viewBox="0 0 22 20" fill="none" aria-hidden>
            <rect x="11.500" y="2.500" width="9" height="11" stroke="#ddd" />
            <rect x="1" y="1" width="11.500" height="17" rx="1" fill="#595959" stroke="#f4f4f4" strokeWidth="1.500" />
            <rect x="3" y="3.500" width="7.500" height="11" stroke="#222" />
            <rect x="6" y="15.500" width="2" height="1.500" fill="#eee" />
          </svg>
          <NameStack>
            <LabelLine htmlFor="obj-name">Name</LabelLine>
            <LabelLine as="span">Type</LabelLine>
          </NameStack>
        </IdentityLabels>
        <NameStack>
          <NameWrap>
            <Field id="obj-name" defaultValue="ename" />
            <TextCaret />
          </NameWrap>
          <TypeValue>Panorama</TypeValue>
        </NameStack>
        <VRule />
        <ModeKeys>
          <ModeKey $on aria-label="Properties">
            <svg width="18" height="16" viewBox="0 0 18 16" aria-hidden>
              <rect x="1.500" y="1.500" width="13" height="9" fill="#5b83c8" stroke="#222" />
              <path d="M3 14h6" stroke="#222" strokeWidth="2" />
              <path d="M8.500 6L5 10l3.500 4M12.500 6l3.500 4-3.500 4M10.500 5v10" fill="none" stroke="#222" strokeWidth="3" />
              <path d="M8.500 6L5 10l3.500 4M12.500 6l3.500 4-3.500 4" fill="none" stroke="#fff" strokeWidth="1.200" />
            </svg>
          </ModeKey>
          <ModeKey aria-label="Events">
            <svg width="18" height="16" viewBox="0 0 18 16" aria-hidden>
              <rect x="1.500" y="1.500" width="13" height="9" fill="#777" stroke="#bbb" />
              <path d="M11 2L7 9h3l-2 6 7-8h-3l3-5z" fill="#d0d0d0" stroke="#444" strokeWidth=".8" />
            </svg>
          </ModeKey>
        </ModeKeys>
      </Identity>
      <SearchBox>
        <input aria-label="Search" placeholder="Search" />
        <svg width="14" height="14" viewBox="0 0 14 14" fill="none" stroke="#8c8c8c" strokeWidth="1.800" aria-hidden>
          <circle cx="8.500" cy="5" r="4" />
          <path d="M5.500 8L1 12.500" />
        </svg>
      </SearchBox>
    </PropsHead>
    <PropsBody>
      <PropsScroll>
        <Category>
          <CategoryTitle>
            <Tri /> Brushes
          </CategoryTitle>
          <CategoryBody $flush>
            <BrushList>
              {brushes.map((b) => (
                <BrushRow key={b.name} $on={b.on}>
                  <BrushName>{b.name}</BrushName>
                  <Swatch aria-label={`${b.name} brush`} $bg={b.bg}>
                    {b.text}
                  </Swatch>
                  <Marker $fill aria-label={`${b.name} options`} />
                </BrushRow>
              ))}
            </BrushList>
            <BrushKinds>
              <BrushKind aria-label="No brush">
                <svg width="18" height="13" viewBox="0 0 18 13" fill="none" aria-hidden>
                  <rect x="1" y="1" width="16" height="11" stroke="#bbb" fill="#3c3c3c" />
                  <path d="M2 11L16 2" stroke="#ccc" strokeWidth="1.500" />
                </svg>
              </BrushKind>
              <BrushKind $on aria-label="Solid color brush">
                <svg width="18" height="14" viewBox="0 0 18 14" aria-hidden>
                  <rect x=".5" y=".5" width="17" height="13" rx="1" fill="#fff" stroke="#222" />
                  <rect x="2.500" y="2.500" width="13" height="9" fill="#6a8ac6" stroke="#444" />
                </svg>
              </BrushKind>
              <BrushKind aria-label="Gradient brush">
                <svg width="17" height="13" viewBox="0 0 17 13" aria-hidden>
                  <defs>
                    <linearGradient id="gb">
                      <stop stopColor="#ccc" />
                      <stop offset="1" stopColor="#333" />
                    </linearGradient>
                  </defs>
                  <rect x="1" y="1" width="15" height="11" fill="url(#gb)" stroke="#bbb" />
                </svg>
              </BrushKind>
              <BrushKind aria-label="Tile brush">
                <svg width="17" height="14" viewBox="0 0 17 14" aria-hidden>
                  <rect x="1" y="1" width="12" height="8" fill="#444" stroke="#bbb" />
                  <rect x="3" y="5" width="13" height="8" fill="#444" stroke="#bbb" />
                  <path d="M3 2l3 2h3M5 7l3 2-2 3H4zM10 7l5 1-1 4-3-2z" fill="#bbb" />
                </svg>
              </BrushKind>
              <BrushKind aria-label="Brush resources">
                <svg width="16" height="14" viewBox="0 0 16 14" aria-hidden>
                  <path d="M14.500 4v9H4" fill="none" stroke="#bbb" />
                  <rect x="1" y="1" width="11" height="9" fill="#777" stroke="#bbb" />
                </svg>
              </BrushKind>
            </BrushKinds>
            <EditorBlock>
              <EditorTabs>
                <EditorTab $on>
                  Editor <Marker as="i" $fill />
                </EditorTab>
                <EditorTab>Color resources</EditorTab>
              </EditorTabs>
              <EditorBody>
                <Picker>
                  <ColorField>
                    <PickRing />
                  </ColorField>
                  <HueBar />
                  <Preview>
                    <PreviewNow />
                    <PreviewLast />
                  </Preview>
                  <Dropper aria-label="Color eyedropper">
                    <DropperIcon />
                  </Dropper>
                </Picker>
                <Channels>
                  {channels.map((ch) => (
                    <Channel key={ch.id} $plain={ch.dark}>
                      <span>{ch.id}</span>
                      <ChannelInput defaultValue={ch.value} $bar={ch.bar} $dark={ch.dark} />
                    </Channel>
                  ))}
                  <HexRow>
                    <HexKey aria-label="Swap colors">
                      <svg width="15" height="12" viewBox="0 0 15 12" aria-hidden>
                        <path d="M0 4l4-4v2h6v4H4v2z" fill="#ccc" />
                        <path d="M15 8l-4 4v-2H6V6h5V4z" fill="#ccc" stroke="#444" strokeWidth=".6" />
                      </svg>
                    </HexKey>
                    <input aria-label="Hex color" defaultValue="#00FFFFFF" />
                  </HexRow>
                </Channels>
              </EditorBody>
            </EditorBlock>
          </CategoryBody>
          <Expander aria-label="More brush properties">
            <Chev />
          </Expander>
        </Category>
        <Category>
          <CategoryTitle>
            <Tri /> Appearance
          </CategoryTitle>
          <CategoryBody>
            <TextProp id="opacity" label="Opacity" value="100%" soft />
            <PropRow>
              <label htmlFor="vis">Visibility</label>
              <SelectWrap>
                <select id="vis">
                  <option>Visible</option>
                  <option>Collapsed</option>
                </select>
                <SelectArrow>
                  <DropV />
                </SelectArrow>
              </SelectWrap>
              <Marker aria-label="Visibility options" />
            </PropRow>
            <ThicknessBlock>
              <ThicknessName>BorderThickness</ThicknessName>
              <ThicknessGrid>
                {[0, 180, 90, 270].map((r) => (
                  <Edge key={r}>
                    <EdgeArrow r={r} />
                    <Field aria-label={`BorderThickness ${r}`} defaultValue="0" />
                  </Edge>
                ))}
              </ThicknessGrid>
              <Marker aria-label="BorderThickness options" />
            </ThicknessBlock>
          </CategoryBody>
          <Expander aria-label="More appearance properties">
            <Chev />
          </Expander>
        </Category>
        <Category>
          <CategoryTitle>
            <Tri /> Layout
          </CategoryTitle>
          <CategoryBody>
            {["Width", "Height"].map((n) => (
              <TextProp
                key={n}
                id={n}
                label={n}
                value={n === "Width" ? "Auto (480)" : "Auto (800)"}
                extra={
                  <AutoKey aria-label={`Set ${n} to Auto`}>
                    <FourWay />
                  </AutoKey>
                }
              />
            ))}
            <Pair a="Row" b="RowSpan" bLabel="RowSpan" />
            <Pair a="Column" b="ColumnSpan" bLabel="ColumnS..." />
            <PropRow>
              <span />
              <Field aria-label="ZIndex" />
            </PropRow>
          </CategoryBody>
        </Category>
      </PropsScroll>
      <PropsRail>
        <Tri d="up" />
        <VThumb $h={293} />
        <Spacer />
        <Tri />
      </PropsRail>
    </PropsBody>
  </PropsPanel>
);

function BlendIcon({ s }: { s: number }) {
  return (
    <svg width={s} height={s} viewBox="0 0 30 30" aria-hidden>
      <defs>
        <linearGradient id={`bl${s}`} x2="1" y2="1">
          <stop stopColor="#e8f4fb" />
          <stop offset=".5" stopColor="#5fa4cf" />
          <stop offset="1" stopColor="#1d5f98" />
        </linearGradient>
      </defs>
      <rect x=".5" y=".5" width="29" height="29" fill={`url(#bl${s})`} stroke="#2f6690" />
      <text x="4" y="18" fontSize="20" fontWeight="700" fill="#a8d4ec" fontFamily="Open Sans, sans-serif">
        B
      </text>
      <text x="16" y="27" fontSize="19" fontWeight="700" fill="#fff" fontFamily="Open Sans, sans-serif">
        4
      </text>
    </svg>
  );
}

const Bar = () => (
  <Taskbar>
    <StartKey aria-label="Start">
      <svg width="28" height="26" viewBox="0 0 28 26" fill="#fff" aria-hidden>
        <path d="M0 4l11-1.500V12H0zM12.500 2.200L28 0v12H12.500zM0 13.500h11V23L0 21.500zM12.500 13.500H28V26l-15.500-2.200z" />
      </svg>
    </StartKey>
    <PinKey aria-label="Internet Explorer">
      <svg width="32" height="32" viewBox="0 0 32 32" aria-hidden>
        <path d="M28.500 18.500H12q.5 5 5.500 5 3.500 0 4.500-2h6Q26 29.500 17 29.500 5.500 29 5.500 18T17 6q12 0 11.500 12.500zM12 14.500h10.500q-.5-4-5-4t-5.500 4z" fill="#5cc8f4" stroke="#1a7fc0" strokeWidth=".8" />
        <path d="M4 30q-5-4 3-15Q18 3 26 1.500q5 0 3 6.500 0-4-4-3.500-8 2-15 10.500Q4 24 6 28q2 1 5-.5-5 4-7 2.500z" fill="#f8c21c" stroke="#c98c10" strokeWidth=".5" />
      </svg>
    </PinKey>
    <TaskKey aria-label="File Explorer">
      <svg width="34" height="30" viewBox="0 0 34 30" aria-hidden>
        <path d="M2 3q0-2 2-2h9l2 2h9l2 3h6v20H2z" fill="#f3dc8c" stroke="#c9a44a" strokeWidth=".7" />
        <path d="M6 2h4v2H6z" fill="#2f9e44" />
        <path d="M15 4h4v2h-4z" fill="#d03a2a" />
        <path d="M23 6h4v2h-4z" fill="#2a86d8" />
        <path d="M2 8h30v19H2z" fill="#f7e7a8" />
        <path d="M6 29V20q0-3 3-3h15q3 0 3 3v9h-6v-6h-9v6z" fill="#9ed2ec" stroke="#5a9cc4" strokeWidth=".8" />
      </svg>
    </TaskKey>
    <TaskKey $on aria-label="Expression Blend">
      <BlendIcon s={30} />
    </TaskKey>
    <TaskKey aria-label="Device tool">
      <svg width="32" height="30" viewBox="0 0 32 30" aria-hidden>
        <rect x="3" y="5" width="25" height="20" fill="#e4e6ea" stroke="#4a5a80" strokeWidth="2.500" />
        <rect x="12" y="7" width="9" height="17" rx="1" fill="#222" />
        <rect x="14" y="10" width="5" height="8" fill="#999" />
        <path d="M15 23h9v-3l7 5-7 5v-3h-9z" fill="#3e74d8" stroke="#2450a8" strokeWidth=".6" />
      </svg>
    </TaskKey>
    <TaskKey aria-label="Chrome">
      <svg width="30" height="30" viewBox="0 0 30 30" aria-hidden>
        <circle cx="15" cy="15" r="14" fill="#f8cf2c" />
        <path d="M15 15L3 7.500A14 14 0 0127.500 9H15z" fill="#dc3c2c" />
        <path d="M3 7.500A14 14 0 0013.500 29L20 18l-5-3-5 2z" fill="#3ca84c" />
        <circle cx="15" cy="15" r="6.500" fill="#fff" />
        <circle cx="15" cy="15" r="5" fill="#3a78c8" />
      </svg>
    </TaskKey>
    <TaskKey aria-label="Notepad++">
      <svg width="30" height="32" viewBox="0 0 30 32" aria-hidden>
        <defs>
          <linearGradient id="np" x2="0" y2="1">
            <stop offset=".2" stopColor="#fff" />
            <stop offset=".6" stopColor="#b8e45c" />
            <stop offset="1" stopColor="#1c9a1c" />
          </linearGradient>
        </defs>
        <path d="M1 2h18l5 5v24H1z" fill="url(#np)" stroke="#999" strokeWidth="1.500" />
        <path d="M3 2h15" stroke="#888" strokeDasharray="2 1" strokeWidth="2" />
        <path d="M7 21V11h3v10M12 15h5M14.500 12.500v5M18 15h5M20.500 12.500v5" fill="none" stroke="#222" strokeWidth="1.300" />
        <path d="M26 2l3 2-10 22-3 2v-4z" fill="#f0a830" stroke="#8c5c10" strokeWidth=".6" />
        <path d="M26 1l4 2-1 3-4-2z" fill="#b84a50" />
      </svg>
    </TaskKey>
    <Tray>
      <TrayArrow aria-label="Show hidden icons">
        <Tri d="up" s={8} f="#f4f4f4" />
      </TrayArrow>
      <svg width="17" height="18" viewBox="0 0 17 18" fill="#fff" stroke="#4c3c1c" strokeWidth=".8" aria-hidden>
        <path d="M2 2h2v15H2zM4 3h5v2h6l-2 3 1 3H8V9H4z" />
      </svg>
      <svg width="16" height="18" viewBox="0 0 16 18" fill="none" aria-hidden>
        <path d="M8 3.500h6v12H8zM9.500 2h3M2 2v4M5 2v4M1 6.500h5v3H1zM3.500 9v7" stroke="#4c3c1c" strokeWidth="3.200" />
        <path d="M8 3.500h6v12H8zM9.500 2h3M2 2v4M5 2v4M1 6.500h5v3H1zM3.500 9v7" stroke="#fff" strokeWidth="1.600" />
      </svg>
      <svg width="16" height="18" viewBox="0 0 16 18" fill="none" aria-hidden>
        <path d="M6 4h9v8H6M10.500 12v3M6 15.500h9M3 6v6h3M1 2h4v4H1z" stroke="#4c3c1c" strokeWidth="3.200" />
        <path d="M6 4h9v8H6M10.500 12v3M6 15.500h9M3 6v6h3M1 2h4v4H1z" stroke="#fff" strokeWidth="1.600" />
      </svg>
      <svg width="16" height="18" viewBox="0 0 16 18" aria-hidden>
        <path d="M1 6h2l5-4.500v14L3 11H1z" fill="#fff" stroke="#4c3c1c" strokeWidth=".8" />
        <circle cx="11" cy="12" r="4" fill="#fff" stroke="#d8262c" strokeWidth="1.800" />
        <path d="M8 9l6 6" stroke="#d8262c" strokeWidth="1.800" />
      </svg>
      <Clock>
        6:24 PM
        <br />
        4/4/2014
      </Clock>
    </Tray>
  </Taskbar>
);

export default function App() {
  return (
    <Shell>
      <Global />
      <TitleBar>
        <AppBadge>
          <BlendIcon s={16} />
        </AppBadge>
        <Title>newZealicon.sln - Microsoft Expression Blend 4</Title>
        <WindowButtons>
          <WindowButton aria-label="Minimize">
            <svg width="8" height="8" aria-hidden>
              <rect y="5" width="8" height="2" fill="#222" />
            </svg>
          </WindowButton>
          <WindowButton aria-label="Restore">
            <svg width="10" height="10" viewBox="0 0 10 10" fill="none" stroke="#222" aria-hidden>
              <path d="M.5 2.500h7v7h-7zM.5 3.500h7M2.500.5h7v7" />
            </svg>
          </WindowButton>
          <WindowButton $close aria-label="Close">
            <Cross s={10} f="#fff" w={1.800} />
          </WindowButton>
        </WindowButtons>
      </TitleBar>
      <MenuBar>
        {["File", "Edit", "View", "Object", "Project", "Tools", "Window", "Help"].map((m) => (
          <MenuItem key={m}>{m}</MenuItem>
        ))}
      </MenuBar>
      <Workspace>
        <ToolBox />
        <Objects />
        <Doc />
        <Properties />
      </Workspace>
      <Bar />
    </Shell>
  );
}
